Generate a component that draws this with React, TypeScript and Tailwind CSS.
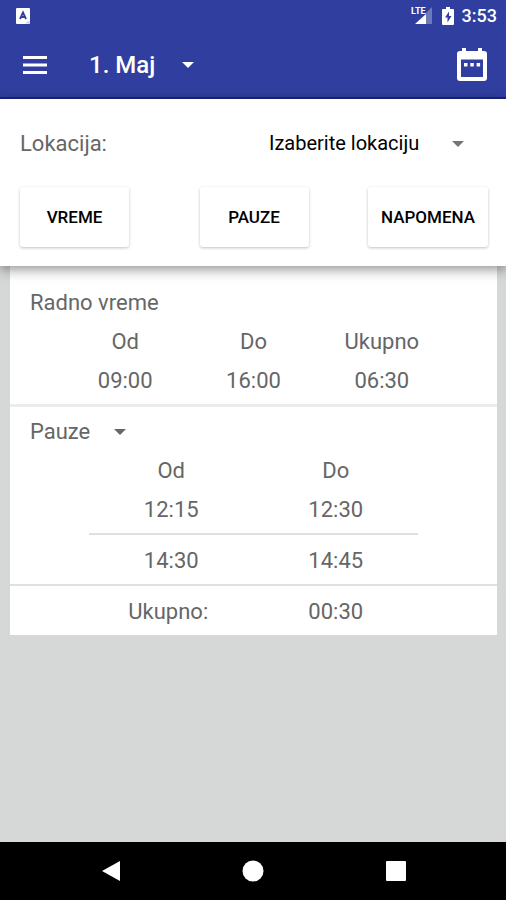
import React, { useState } from 'react';

const days = ['1. Maj', '2. Maj', '3. Maj'];
const locations = ['Izaberite lokaciju'];
const actions = ['VREME', 'PAUZE', 'NAPOMENA'];

const breaks = [
  { from: '12:15', to: '12:30' },
  { from: '14:30', to: '14:45' },
];

function Caret({ className }: { className: string }) {
  return (
    <svg viewBox="0 0 12 6" className={`h-[6px] w-3 fill-current ${className}`} aria-hidden="true">
      <path d="M0 0h12L6 6z" />
    </svg>
  );
}

function StatusBar() {
  return (
    <div className="flex h-8 items-center justify-between pl-4 pr-[9px] text-white">
      <svg viewBox="0 0 14 16" className="h-4 w-[14px]" aria-hidden="true">
        <path d="M1 0h12a1 1 0 0 1 1 1v14a1 1 0 0 1-1 1H1a1 1 0 0 1-1-1V1a1 1 0 0 1 1-1z" fill="#fff" />
        <path d="M4 11 7 4.500 10 11M5.200 9h3.600" fill="none" stroke="#303f9f" strokeWidth="1.8" />
        <path d="M9 15.500l4.500-3v3z" fill="#c5cae9" />
      </svg>
      <div className="flex items-center gap-2">
        <div className="mr-[2px] flex h-5 items-start">
          <span className="-mr-3 font-[Roboto] text-[9px] font-bold leading-[11px]">LTE</span>
          <svg viewBox="0 0 18 18" className="h-[18px] w-[18px]" aria-hidden="true">
            <path d="M18 1v17h-6V7z" fill="#fff" opacity="0.3" />
            <path d="M12 8v10H1z" fill="#fff" />
          </svg>
        </div>
        <svg viewBox="0 0 12 18" className="h-[18px] w-3" aria-hidden="true">
          <path d="M4 0h4v2h3a1 1 0 0 1 1 1v14a1 1 0 0 1-1 1H1a1 1 0 0 1-1-1V3a1 1 0 0 1 1-1h3z" fill="#fff" />
          <path d="M7 4.500 3 10.500h2.500V15.500L9.500 9H7z" fill="#303f9f" />
        </svg>
        <span className="text-lg font-medium leading-6">3:53</span>
      </div>
    </div>
  );
}

function AppBar() {
  return (
    <div className="flex h-[65px] items-center pl-[23px] pr-[18px] text-white">
      <button type="button" aria-label="Meni">
        <svg viewBox="0 0 24 18" className="h-[18px] w-6" aria-hidden="true">
          <path d="M0 0h24v3H0zM0 7.500h24v3H0zM0 15h24v3H0z" fill="#fff" />
        </svg>
      </button>
      <div className="relative ml-[42px] flex items-center">
        <select
          aria-label="Datum"
          className="appearance-none bg-transparent pr-[38px] text-2xl font-medium leading-8 outline-none"
        >
          {days.map(day => (
            <option key={day}>{day}</option>
          ))}
        </select>
        <Caret className="pointer-events-none absolute right-0" />
      </div>
      <button type="button" aria-label="Kalendar" className="ml-auto">
        <svg viewBox="0 0 32 36" className="h-9 w-8" aria-hidden="true">
          <path
            fillRule="evenodd"
            d="M6 1h4v3h12V1h4v3h2a3 3 0 0 1 3 3v24a3 3 0 0 1-3 3H4a3 3 0 0 1-3-3V7a3 3 0 0 1 3-3h2zM5 12.500V30h22V12.500z"
            fill="#fff"
          />
          <path d="M8 16h3.500v3.500H8zM14.300 16h3.500v3.500h-3.500zM20.600 16h3.500v3.500h-3.500z" fill="#fff" />
        </svg>
      </button>
    </div>
  );
}

export default function App() {
  const [showBreaks, setShowBreaks] = useState(true);

  return (
    <div className="flex min-h-screen flex-col bg-[#d6d8d7] font-[Roboto,sans-serif] text-[22px] leading-[39px] text-[#666]">
      <header className="border-b-2 border-[#1a2388] bg-[#303f9f]">
        <StatusBar />
        <AppBar />
      </header>

      <section className="relative bg-white pb-[19px] pl-5 pr-[18px] pt-[25px] shadow-[0_3px_12px_rgba(0,0,0,0.45)]">
        <div className="flex items-center justify-between">
          <label htmlFor="location">Lokacija:</label>
          <div className="relative mr-6 flex items-center">
            <select
              id="location"
              className="appearance-none bg-transparent pr-11 text-xl leading-[39px] text-black outline-none"
            >
              {locations.map(location => (
                <option key={location}>{location}</option>
              ))}
            </select>
            <Caret className="pointer-events-none absolute right-0 text-[#757575]" />
          </div>
        </div>
        <div className="mt-6 grid grid-cols-[1fr_auto_1fr]">
          {actions.map(action => (
            <button
              key={action}
              type="button"
              className="h-[60px] min-w-[109px] justify-self-start rounded-[3px] bg-white px-[13px] text-[17px] font-medium text-black shadow-[0_1px_3px_rgba(0,0,0,0.25)] last:justify-self-end"
            >
              {action}
            </button>
          ))}
        </div>
      </section>

      <main className="ml-[10px] mr-[9px] flex-1">
        <div className="bg-white">
          {/* Working hours */}
          <section className="border-b-3 border-[#ececec] pb-1 pt-[17px]">
            <h2 className="pl-5">Radno vreme</h2>
            <div className="px-[51px]">
              <table className="w-full table-fixed text-center">
                <thead>
                  <tr>
                    <th className="font-normal">Od</th>
                    <th className="font-normal">Do</th>
                    <th className="font-normal">Ukupno</th>
                  </tr>
                </thead>
                <tbody>
                  <tr>
                    <td>09:00</td>
                    <td>16:00</td>
                    <td>06:30</td>
                  </tr>
                </tbody>
              </table>
            </div>
          </section>

          {/* Breaks */}
          <section className="pt-[5px]">
            <h2 className="pl-5">
              <button
                type="button"
                aria-expanded={showBreaks}
                onClick={() => setShowBreaks(!showBreaks)}
                className="flex items-center gap-6"
              >
                Pauze
                <Caret className="text-[#666]" />
              </button>
            </h2>
            {showBreaks && (
              <div className="px-[79px] pb-1">
                <table className="w-full table-fixed text-center">
                  <thead>
                    <tr>
                      <th className="font-normal">Od</th>
                      <th className="font-normal">Do</th>
                    </tr>
                  </thead>
                  <tbody>
                    {breaks.map(item => (
                      <tr key={item.from} className="group border-b-2 border-[#e0e0e0] last:border-b-0">
                        <td className="pb-1 group-last:pb-0 group-last:pt-[6px]">{item.from}</td>
                        <td className="pb-1 group-last:pb-0 group-last:pt-[6px]">{item.to}</td>
                      </tr>
                    ))}
                  </tbody>
                </table>
              </div>
            )}
            <div className="border-t-2 border-[#e0e0e0] px-[79px] pb-1 pt-[6px]">
              <dl className="grid grid-cols-2 text-center">
                <dt className="pr-[6px]">Ukupno:</dt>
                <dd>00:30</dd>
              </dl>
            </div>
          </section>
        </div>
      </main>

      <nav className="flex h-[58px] items-center justify-center gap-[122px] bg-black text-white">
        <button type="button" aria-label="Nazad">
          <svg viewBox="0 0 20 22" className="h-[22px] w-5 fill-current" aria-hidden="true">
            <path d="M20 1v20L2 11z" />
          </svg>
        </button>
        <button type="button" aria-label="Početna">
          <svg viewBox="0 0 22 22" className="h-[22px] w-[22px] fill-current" aria-hidden="true">
            <circle cx="11" cy="11" r="10.500" />
          </svg>
        </button>
        <button type="button" aria-label="Nedavno">
          <svg viewBox="0 0 20 20" className="h-5 w-5 fill-current" aria-hidden="true">
            <rect width="20" height="20" rx="1" />
          </svg>
        </button>
      </nav>
    </div>
  );
}
